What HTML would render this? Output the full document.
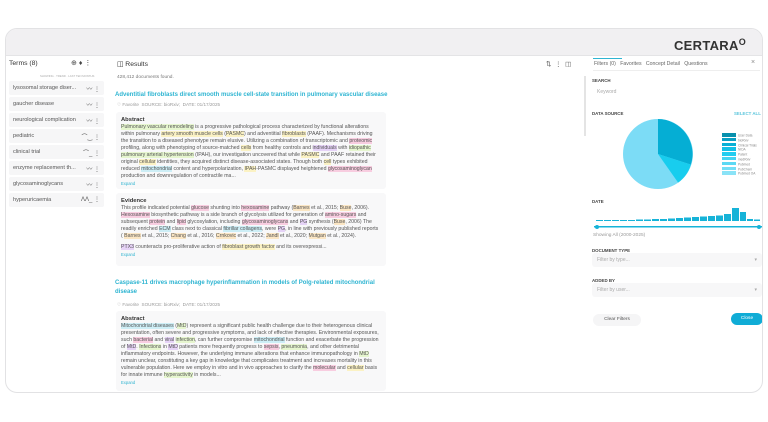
<!DOCTYPE html><html><head><meta charset="utf-8"><style>
*{box-sizing:border-box;margin:0;padding:0}
body{width:768px;height:422px;background:#fff;font-family:"Liberation Sans",sans-serif;color:#444;position:relative;overflow:hidden}
.card{position:absolute;left:5px;top:28px;width:758px;height:365px;border:1px solid #e2e2e4;border-radius:12px;overflow:hidden;background:#fff}
.hdr{position:absolute;left:0;top:0;right:0;height:27px;background:#f1f0f2;border-bottom:1px solid #e4e4e6}
.logo{position:absolute;right:16px;top:8px;font-size:13px;font-weight:bold;color:#333;letter-spacing:.3px}
.a{position:absolute;white-space:nowrap}
.row{position:absolute;left:3px;width:95px;height:14px;background:#f6f6f7;border-radius:2px;font-size:5.6px;color:#555;padding:4px 0 0 4px}
.row i{position:absolute;right:4px;top:3px;font-style:normal;font-size:6px}
.box{position:absolute;left:110px;width:270px;background:#f8f8f9;border-radius:3px;padding:4px 5px;font-size:5.2px;line-height:7px;color:#555}
.box b{display:block;font-size:5.8px;color:#333;line-height:8px}
.box .e{color:#2fb3d0;font-size:4.2px}
.g{background:#e6f6cf}.y{background:#fbf2c4}.p{background:#f8cde0}.v{background:#e6d3f7}.c{background:#cdeef6}.o{background:#fbe6c4}
.t{position:absolute;left:109px;font-size:6px;font-weight:bold;color:#2fb5d2;line-height:10px}
.meta{position:absolute;left:111px;font-size:4.6px;color:#999}
.lab{position:absolute;left:586px;font-size:4.4px;font-weight:bold;color:#444}
.inp{position:absolute;left:586px;width:170px;height:14px;background:#f7f7f8;border-radius:3px;font-size:5px;color:#aaa;padding:4px 5px}
</style></head><body>
<div class="card">
<div class="hdr"><div class="logo">CERTARA<span style="font-size:9px;vertical-align:5px">O</span></div></div>
<div class="a" style="left:3px;top:31px;font-size:6.8px;color:#333">Terms (8)</div>
<div class="a" style="left:65px;top:30px;font-size:7px">⊕ <b>♦</b> ⋮</div>
<div class="a" style="left:34px;top:45px;font-size:2.8px;color:#aaa">SHOWING · TREND · LAST TEN MONTHS</div>
<div class="row" style="top:52px">lysosomal storage diser...<i>〰 ⋮</i></div>
<div class="row" style="top:68px">gaucher disease<i>〰 ⋮</i></div>
<div class="row" style="top:84px">neurological complication<i>〰 ⋮</i></div>
<div class="row" style="top:100px">pediatric<i>⌒‿ ⋮</i></div>
<div class="row" style="top:116px">clinical trial<i>⌒_ ⋮</i></div>
<div class="row" style="top:132px">enzyme replacement th...<i>〰 ⋮</i></div>
<div class="row" style="top:148px">glycosaminoglycans<i>〰 ⋮</i></div>
<div class="row" style="top:164px">hyperuricaemia<i>ΛΛ_ ⋮</i></div>
<div class="a" style="left:111px;top:31px;font-size:6.8px;color:#333">◫ Results</div>
<div class="a" style="left:111px;top:46px;font-size:4.8px;color:#777">428,412 documents found.</div>
<div class="a" style="left:540px;top:31px;font-size:6.5px;color:#555">⇅ &nbsp;⋮ &nbsp;◫</div>
<div class="t" style="top:61px">Adventitial fibroblasts direct smooth muscle cell-state transition in pulmonary vascular disease</div>
<div class="meta" style="top:73px">♡ Favorite &nbsp;SOURCE: bioRxiv; &nbsp;DATE: 01/17/2025</div>
<div class="box" style="top:83px;height:77px"><b>Abstract</b><span class="g">Pulmonary vascular remodeling</span> is a progressive pathological process characterized by functional alterations within pulmonary <span class="y">artery smooth muscle cells</span> (<span class="y">PASMC</span>) and adventitial <span class="y">fibroblasts</span> (PAAF). Mechanisms driving the transition to a diseased phenotype remain elusive. Utilizing a combination of transcriptomic and <span class="p">proteomic</span> profiling, along with phenotyping of source-matched <span class="y">cells</span> from healthy controls and <span class="v">individuals</span> with <span class="g">idiopathic pulmonary arterial hypertension</span> (IPAH), our investigation uncovered that while <span class="y">PASMC</span> and PAAF retained their original <span class="y">cellular</span> identities, they acquired distinct disease-associated states. Though both <span class="y">cell</span> types exhibited reduced <span class="c">mitochondrial</span> content and hyperpolarization, <span class="y">IPAH</span>-PASMC displayed heightened <span class="p">glycosaminoglycan</span> production and downregulation of contractile ma...<br><span class="e">Expand</span></div>
<div class="box" style="top:164px;height:73px"><b>Evidence</b>This profile indicated potential <span class="p">glucose</span> shunting into <span class="p">hexosamine</span> pathway (<span class="o">Barnes</span> et al., 2015; <span class="o">Buse</span>, 2006). <span class="p">Hexosamine</span> biosynthetic pathway is a side branch of glycolysis utilized for generation of <span class="p">amino-sugars</span> and subsequent <span class="p">protein</span> and <span class="p">lipid</span> glycosylation, including <span class="p">glycosaminoglycans</span> and <span class="v">PG</span> synthesis (<span class="o">Buse</span>, 2006) The readily enriched <span class="c">ECM</span> class next to classical <span class="c">fibrillar collagens</span>, were <span class="v">PG</span>, in line with previously published reports ( <span class="o">Barnes</span> et al., 2015; <span class="o">Chang</span> et al., 2016; <span class="o">Crnkovic</span> et al., 2022; <span class="o">Jandl</span> et al., 2020; <span class="o">Mutgan</span> et al., 2024).<br><span style="display:block;height:4px"></span><span class="v">PTX3</span> counteracts pro-proliferative action of <span class="y">fibroblast growth factor</span> and its overexpressi...<br><span class="e">Expand</span></div>
<div class="t" style="top:250px;width:270px;white-space:normal;line-height:9px">Caspase-11 drives macrophage hyperinflammation in models of Polg-related mitochondrial disease</div>
<div class="meta" style="top:273px">♡ Favorite &nbsp;SOURCE: bioRxiv; &nbsp;DATE: 01/17/2025</div>
<div class="box" style="top:282px;height:80px"><b>Abstract</b><span class="c">Mitochondrial diseases</span> (<span class="g">MtD</span>) represent a significant public health challenge due to their heterogenous clinical presentation, often severe and progressive symptoms, and lack of effective therapies. Environmental exposures, such <span class="p">bacterial</span> and <span class="v">viral</span> <span class="g">infection</span>, can further compromise <span class="c">mitochondrial</span> function and exacerbate the progression of <span class="v">MtD</span>. <span class="g">Infections</span> in <span class="v">MtD</span> patients more frequently progress to <span class="p">sepsis</span>, <span class="g">pneumonia</span>, and other detrimental inflammatory endpoints. However, the underlying immune alterations that enhance immunopathology in <span class="g">MtD</span> remain unclear, constituting a key gap in knowledge that complicates treatment and increases mortality in this vulnerable population. Here we employ in vitro and in vivo approaches to clarify the <span class="p">molecular</span> and <span class="y">cellular</span> basis for innate immune <span class="g">hyperactivity</span> in models...<br><span class="e">Expand</span></div>
<div class="a" style="left:578px;top:47px;width:1.5px;height:60px;background:#e4e4e4"></div>
<div class="a" style="left:588px;top:32px;font-size:5.2px;color:#666">Filters (0) &nbsp;&nbsp;Favorites &nbsp;&nbsp;Concept Detail &nbsp;&nbsp;Questions</div>
<div class="a" style="left:587px;top:29px;width:29px;height:1px;background:#2fb5d2"></div>
<div class="a" style="left:587px;top:41px;width:167px;height:1px;background:#eee"></div>
<div class="a" style="left:745px;top:30px;font-size:7px;color:#888">×</div>
<div class="lab" style="top:49px">SEARCH</div>
<div class="inp" style="top:56px;background:#fff">Keyword</div>
<div class="lab" style="top:82px">DATA SOURCE</div>
<div class="a" style="left:728px;top:82px;font-size:4.4px;font-weight:bold;color:#5cc6dc">SELECT ALL</div>
<svg class="a" style="left:617px;top:90px" width="70" height="70" viewBox="-33 -33 66 66"><circle r="33" fill="#7cdcf6"/><path d="M0 0V-33A33 33 0 0 1 31 10Z" fill="#05aed4"/><path d="M0 0L31 10A33 33 0 0 1 19 27Z" fill="#18cdee"/></svg>
<div class="a" style="left:716px;top:104px;font-size:3.2px;color:#888;line-height:4.3px">
<div><span style="display:inline-block;width:14px;height:3.5px;background:#0890ad;margin-right:2px"></span>User Data</div><div><span style="display:inline-block;width:14px;height:3.5px;background:#0a9fc2;margin-right:2px"></span>bioRxiv</div><div><span style="display:inline-block;width:14px;height:3.5px;background:#08b0d6;margin-right:2px"></span>Clinical Trials</div><div><span style="display:inline-block;width:14px;height:3.5px;background:#12c0e6;margin-right:2px"></span>NIDA</div><div><span style="display:inline-block;width:14px;height:3.5px;background:#22cdf0;margin-right:2px"></span>Patent</div><div><span style="display:inline-block;width:14px;height:3.5px;background:#45d4f2;margin-right:2px"></span>medRxiv</div><div><span style="display:inline-block;width:14px;height:3.5px;background:#5cd9f4;margin-right:2px"></span>Pubmed</div><div><span style="display:inline-block;width:14px;height:3.5px;background:#74def6;margin-right:2px"></span>PubChem</div><div><span style="display:inline-block;width:14px;height:3.5px;background:#8ae3f7;margin-right:2px"></span>Pubmed OA</div></div>
<div class="lab" style="top:170px">DATE</div>
<svg class="a" style="left:588px;top:176px" width="168" height="26"><g fill="#16b3d8">
<rect x="2" y="15" width="7" height="1"/><rect x="10" y="15" width="7" height="1"/><rect x="18" y="15" width="7" height="1"/><rect x="26" y="15" width="7" height="1"/><rect x="34" y="15" width="7" height="1"/><rect x="42" y="14.5" width="7" height="1.5"/><rect x="50" y="14.5" width="7" height="1.5"/><rect x="58" y="14" width="7" height="2"/><rect x="66" y="14" width="7" height="2"/><rect x="74" y="13.5" width="7" height="2.5"/><rect x="82" y="13" width="7" height="3"/><rect x="90" y="12.5" width="7" height="3.5"/><rect x="98" y="12" width="7" height="4"/><rect x="106" y="11.5" width="7" height="4.5"/><rect x="114" y="11" width="7" height="5"/><rect x="122" y="10.5" width="7" height="5.5"/><rect x="130" y="9" width="7" height="7"/><rect x="138" y="3" width="7" height="13"/><rect x="146" y="7" width="6" height="9"/><rect x="153" y="14" width="6" height="2"/><rect x="160" y="14.5" width="6" height="1.5"/>
<rect x="0" y="21" width="168" height="1.5"/><circle cx="3" cy="22" r="2"/><circle cx="165" cy="22" r="2"/></g></svg>
<div class="a" style="left:587px;top:204px;font-size:4.8px;color:#999">Showing All (2000-2025)</div>
<div class="lab" style="top:219px">DOCUMENT TYPE</div>
<div class="inp" style="top:224px">Filter by type...<span style="float:right">▾</span></div>
<div class="lab" style="top:249px">ADDED BY</div>
<div class="inp" style="top:254px">Filter by user...<span style="float:right">▾</span></div>
<div class="a" style="left:587px;top:285px;width:48px;height:12px;border-radius:6px;background:#f5f5f6;font-size:4.8px;color:#555;text-align:center;line-height:12px">Clear Filters</div>
<div class="a" style="left:725px;top:284px;width:32px;height:12px;border-radius:6px;background:#10acd6;font-size:4.8px;color:#fff;text-align:center;line-height:12px">Close</div>
</div>
</body></html>
